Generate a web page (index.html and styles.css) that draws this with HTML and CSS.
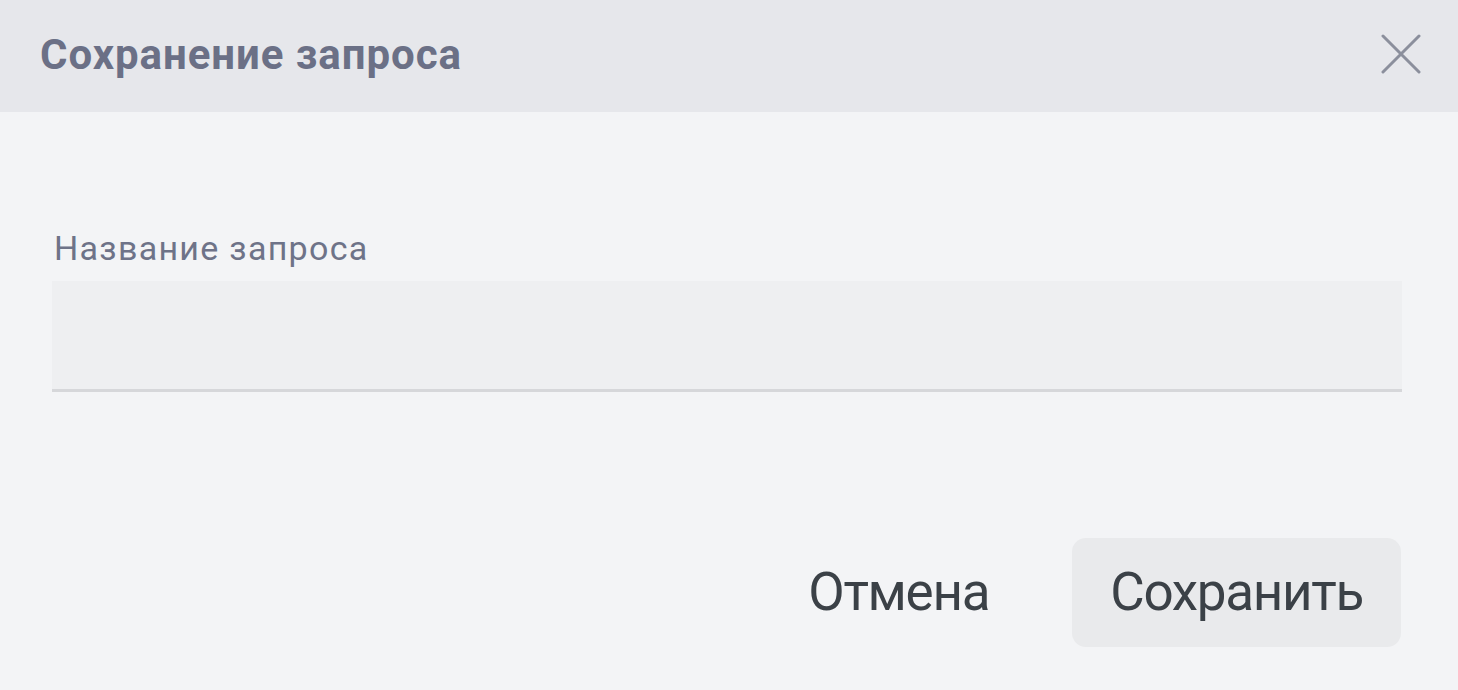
FILE: index.html
```html
<!DOCTYPE html>
<html lang="ru">
<head>
    <meta charset="UTF-8">
    <title>Сохранение запроса</title>
    <link rel="stylesheet" href="styles.css">
</head>
<body>
    <div class="dialog">
        <div class="dialog-head">
            <h1 class="dialog-title">Сохранение запроса</h1>
            <button class="dialog-close" type="button" aria-label="Закрыть">
                <svg width="40" height="40" viewBox="0 0 40 40">
                    <path d="M2 2L38 38M38 2L2 38" stroke="#8b8f9c" stroke-width="3" stroke-linecap="round" fill="none"/>
                </svg>
            </button>
        </div>
        <div class="dialog-body">
            <label class="field-label" for="queryName">Название запроса</label>
            <input class="field-input" id="queryName" type="text" value="">
        </div>
        <div class="dialog-foot">
            <button class="btn btn-text" type="button">Отмена</button>
            <button class="btn btn-fill" type="button">Сохранить</button>
        </div>
    </div>
</body>
</html>
```

FILE: styles.css
```css
* {
    margin: 0;
    padding: 0;
    box-sizing: border-box;
}
body {
    background-color: #f3f4f6;
    font-family: Roboto, "Noto Sans", Arial, sans-serif;
}
.dialog {
    width: 1458px;
    height: 690px;
    display: flex;
    flex-direction: column;
    background-color: #f3f4f6;
}
.dialog-head {
    height: 112px;
    display: flex;
    align-items: center;
    justify-content: space-between;
    padding: 0 37px 0 40px;
    background-color: #e6e7eb;
}
.dialog-title {
    font: 700 42px/50px Roboto, sans-serif;
    letter-spacing: 0.95px;
    color: #6b7086;
    margin-top: -3px;
}
.dialog-close {
    width: 40px;
    height: 40px;
    border: 0;
    background: none;
    cursor: pointer;
    margin-top: -5px;
}
.dialog-close svg {
    display: block;
}
.dialog-body {
    display: flex;
    flex-direction: column;
    padding: 116px 56px 0 52px;
}
.field-label {
    font: 400 34px/40px Roboto, sans-serif;
    letter-spacing: 1.3px;
    color: #6e7388;
    padding-left: 2px;
    margin-bottom: 13px;
}
.field-input {
    height: 111px;
    border: 0;
    border-bottom: 3px solid #d6d7da;
    background-color: #eeeff1;
    font: 400 34px Roboto, sans-serif;
    padding: 0 16px;
    outline: none;
}
.dialog-foot {
    display: flex;
    justify-content: flex-end;
    gap: 45px;
    padding: 146px 57px 0 0;
}
.btn {
    height: 109px;
    padding: 0 38px;
    border: 0;
    border-radius: 14px;
    font: 400 53px/109px Roboto, sans-serif;
    letter-spacing: -1.3px;
    color: #3b4147;
    background: none;
    cursor: pointer;
}
.btn-fill {
    background-color: #e9eaec;
}
```
